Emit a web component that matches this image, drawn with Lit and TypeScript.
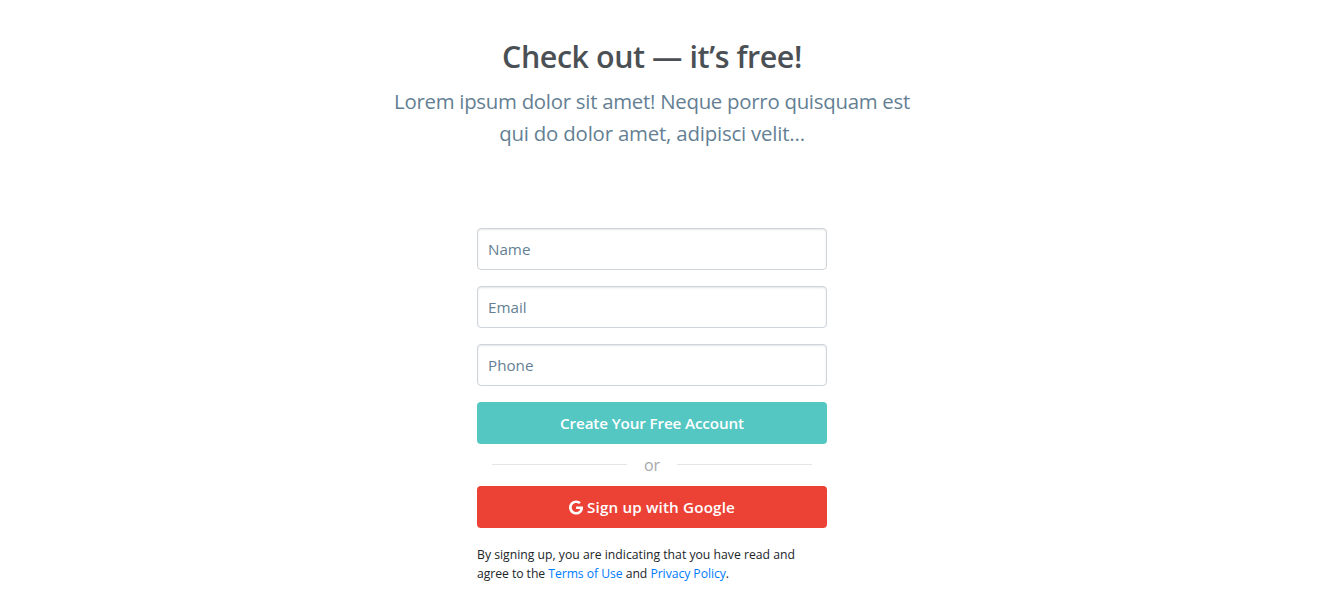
import { LitElement, html, css } from "lit";
import { customElement } from "lit/decorators.js";

@customElement("app-root")
class AppRoot extends LitElement {
  static styles = css`
    :host {
      display: block;
      box-sizing: border-box;
      height: 592px;
      padding-right: 17px;
      overflow: hidden;
      background: #fff;
      color: #212529;
      font-family: "Open Sans", "Noto Sans", sans-serif;
      font-size: 16px;
      line-height: 24px;
    }
    * { box-sizing: border-box; }
    header { padding-top: 38px; text-align: center; white-space: nowrap; }
    h1 {
      margin: 0 0 9px;
      color: #4b5055;
      font-size: 30.4px;
      font-weight: 550;
      line-height: 38px;
      letter-spacing: -0.42px;
    }
    .lead { margin: 0; color: #647f93; font-size: 20.4px; line-height: 32px; letter-spacing: -0.27px; }
    .lead .second { letter-spacing: -0.19px; }
    form { width: 350px; margin: 79px auto 0; display: flex; flex-direction: column; }
    .field {
      height: 42px;
      margin: 0 0 16px;
      padding: 0 10px;
      border: 1px solid #ced4da;
      border-radius: 4px;
      background: #fff;
      box-shadow: inset 0 1px 2px rgba(0, 0, 0, 0.1);
      font: inherit;
      font-size: 15.2px;
      outline: none;
    }
    .field::placeholder { color: #647f93; opacity: 1; }
    .button {
      display: flex;
      align-items: center;
      justify-content: center;
      gap: 4px;
      height: 42px;
      padding: 0;
      border: 0;
      border-radius: 4px;
      color: #fff;
      font: inherit;
      font-size: 15.2px;
      font-weight: 600;
    }
    .create { background: #54c7c3; letter-spacing: -0.12px; }
    .google { background: #ec4236; letter-spacing: 0.17px; }
    .icon { width: 14px; height: 15px; fill: currentColor; }
    .divider {
      display: flex;
      align-items: center;
      height: 42px;
      padding: 0 15px;
      color: #a7a9ac;
    }
    .divider span { width: 50px; text-align: center; }
    .divider i { flex: 1; height: 1px; margin-bottom: 1px; background: #e5e5e5; }
    .terms { margin: 17px 0 0; font-size: 12.2px; line-height: 19px; letter-spacing: 0.01px; white-space: nowrap; }
    .links { letter-spacing: -0.05px; }
    a { color: #007bff; text-decoration: none; }
  `;

  render() {
    return html`
      <header>
        <h1>Check out — it’s free!</h1>
        <p class="lead">Lorem ipsum dolor sit amet! Neque porro quisquam est<br /><span class="second">qui do dolor amet, adipisci velit...</span></p>
      </header>
      <form>
        ${["Name", "Email", "Phone"].map(
          (label) => html`<input class="field" placeholder=${label} aria-label=${label} />`
        )}
        <button class="button create" type="button"><span>Create Your Free Account</span></button>
        <div class="divider"><i></i><span>or</span><i></i></div>
        <button class="button google" type="button">
          <svg class="icon" viewBox="0 0 488 512" aria-hidden="true">
            <path d="M488 261.800C488 403.300 391.100 504 248 504 110.800 504 0 393.200 0 256S110.800 8 248 8c66.800 0 123 24.500 166.300 64.900l-67.500 64.900C258.500 52.600 94.300 116.600 94.300 256c0 86.500 69.100 156.600 153.700 156.600 98.200 0 135-70.400 140.800-106.900H248v-85.300h236.100c2.300 12.700 3.900 24.900 3.900 41.400z" />
          </svg>
          <span>Sign up with Google</span>
        </button>
        <p class="terms">
          By signing up, you are indicating that you have read and<br /><span class="links">agree to the
          <a>Terms of Use</a> and <a>Privacy Policy</a>.</span>
        </p>
      </form>
    `;
  }
}
